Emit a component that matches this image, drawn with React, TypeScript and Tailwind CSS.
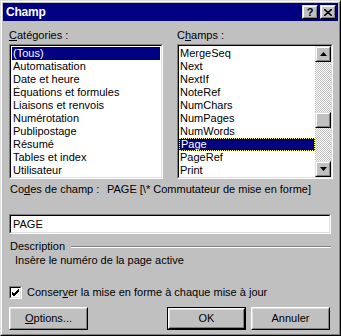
import React from 'react';

const categories = [
  '(Tous)',
  'Automatisation',
  'Date et heure',
  'Équations et formules',
  'Liaisons et renvois',
  'Numérotation',
  'Publipostage',
  'Résumé',
  'Tables et index',
  'Utilisateur',
];

const fields = ['MergeSeq', 'Next', 'NextIf', 'NoteRef', 'NumChars', 'NumPages', 'NumWords', 'Page', 'PageRef', 'Print'];

// sunken 3D frame (list boxes, text fields)
function Sunken({ className, children }: { className?: string; children?: React.ReactNode }) {
  return (
    <div className={`border border-t-[#808080] border-l-[#808080] border-b-white border-r-white ${className ?? ''}`}>
      <div className="h-full border border-t-black border-l-black border-b-[#dfdfdf] border-r-[#dfdfdf] bg-white overflow-hidden">
        {children}
      </div>
    </div>
  );
}

function Raised({ className, children }: { className?: string; children?: React.ReactNode }) {
  return (
    <div className={`border border-t-[#dfdfdf] border-l-[#dfdfdf] border-b-black border-r-black bg-[#c0c0c0] ${className ?? ''}`}>
      <div className="h-full flex items-center justify-center border border-t-white border-l-white border-b-[#808080] border-r-[#808080]">
        {children}
      </div>
    </div>
  );
}

function Button({ children, def }: { children: React.ReactNode; def?: boolean }) {
  return (
    <div className={`w-[79px] h-[23px] ${def ? 'border border-black' : ''}`}>
      <div className="h-full border border-t-white border-l-white border-b-black border-r-black bg-[#c0c0c0]">
        <div className="h-full flex items-center justify-center border border-t-[#dfdfdf] border-l-[#dfdfdf] border-b-[#808080] border-r-[#808080]">
          {children}
        </div>
      </div>
    </div>
  );
}

function Arrow({ up }: { up?: boolean }) {
  return (
    <svg width="7" height="4" viewBox="0 0 7 4">
      {up ? <polygon points="3.5,0 7,4 0,4" fill="black" /> : <polygon points="0,0 7,0 3.5,4" fill="black" />}
    </svg>
  );
}

export default function App() {
  return (
    <div className="w-[341px] h-[336px] bg-[#c0c0c0] font-['Liberation_Sans',sans-serif] text-[11px] leading-[13px] text-black select-none">
      <div className="h-full border border-t-[#dfdfdf] border-l-[#dfdfdf] border-b-black border-r-black">
        <div className="h-full border border-t-white border-l-white border-b-[#808080] border-r-[#808080] p-px flex flex-col">
          {/* Title bar */}
          <div className="h-[18px] bg-[#000080] flex items-center justify-between pl-[3px] pr-[2px] shrink-0">
            <span className="text-white font-bold text-[12px] tracking-[-0.2px]">Champ</span>
            <div className="flex gap-[2px]">
              <Raised className="w-[16px] h-[14px]">
                <span className="font-bold text-[11px] leading-none mt-px">?</span>
              </Raised>
              <Raised className="w-[16px] h-[14px]">
                <svg width="8" height="7" viewBox="0 0 8 7">
                  <path d="M0 0L8 7M8 0L0 7" stroke="black" strokeWidth="1.6" />
                </svg>
              </Raised>
            </div>
          </div>

          {/* Body */}
          <div className="pl-[6px] pt-[8px] flex flex-col">
            <div className="flex gap-[14px]">
              <div className="w-[154px] flex flex-col">
                <div className="h-[13px] mb-[2px]">
                  <span className="underline">C</span>atégories :
                </div>
                <Sunken className="h-[135px]">
                  <div className="px-px pt-px">
                    {categories.map((c, i) => (
                      <div key={c} className={`h-[13px] pl-[1px] whitespace-nowrap ${i === 0 ? 'bg-[#000080] text-white' : ''}`}>
                        {c}
                      </div>
                    ))}
                  </div>
                </Sunken>
              </div>
              <div className="w-[156px] flex flex-col">
                <div className="h-[13px] mb-[2px]">
                  C<span className="underline">h</span>amps :
                </div>
                <Sunken className="h-[135px]">
                  <div className="flex h-full">
                    <div className="flex-1 pt-px">
                      {fields.map((f) => (
                        <div
                          key={f}
                          className={`h-[13px] pl-[1px] whitespace-nowrap ${f === 'Page' ? 'bg-[#000080] text-white border border-dotted border-[#ffff80] leading-[11px] pl-0' : ''}`}
                        >
                          {f}
                        </div>
                      ))}
                    </div>
                    <div className="w-[16px] flex flex-col bg-[repeating-conic-gradient(#c0c0c0_0_25%,#ffffff_0_50%)] bg-[length:2px_2px]">
                      <Raised className="h-[16px]">
                        <Arrow up />
                      </Raised>
                      <div className="h-[50px]" />
                      <Raised className="h-[16px]" />
                      <div className="flex-1" />
                      <Raised className="h-[16px]">
                        <Arrow />
                      </Raised>
                    </div>
                  </div>
                </Sunken>
              </div>
            </div>

            <div className="flex mt-[4px] h-[13px] pl-[1px]">
              <span className="w-[97px]">
                Co<span className="underline">d</span>es de champ :
              </span>
              <span>PAGE [\* Commutateur de mise en forme]</span>
            </div>

            <Sunken className="w-[322px] h-[20px] mt-[18px]">
              <div className="pl-[2px] pt-[2px]">PAGE</div>
            </Sunken>

            <div className="flex items-center mt-[6px] h-[13px] w-[322px] pl-[1px]">
              <span>Description</span>
              <div className="flex-1 ml-[6px] border-t border-t-[#808080] border-b border-b-white" />
            </div>
            <div className="h-[13px] pl-[6px] mt-px">Insère le numéro de la page active</div>

            <div className="flex items-center mt-[19px] h-[13px]">
              <Sunken className="w-[13px] h-[13px]">
                <svg width="9" height="9" viewBox="0 0 9 9" className="block">
                  <path d="M1 4L3 6L8 1M1 5L3 7L8 2M1 6L3 8L8 3" stroke="black" strokeWidth="1" fill="none" />
                </svg>
              </Sunken>
              <span className="ml-[5px]">
                Conser<span className="underline">v</span>er la mise en forme à chaque mise à jour
              </span>
            </div>

            <div className="flex mt-[8px] w-[321px]">
              <Button>
                <span>
                  <span className="underline">O</span>ptions...
                </span>
              </Button>
              <div className="flex-1" />
              <Button def>OK</Button>
              <div className="w-[5px]" />
              <Button>Annuler</Button>
            </div>
          </div>
        </div>
      </div>
    </div>
  );
}
